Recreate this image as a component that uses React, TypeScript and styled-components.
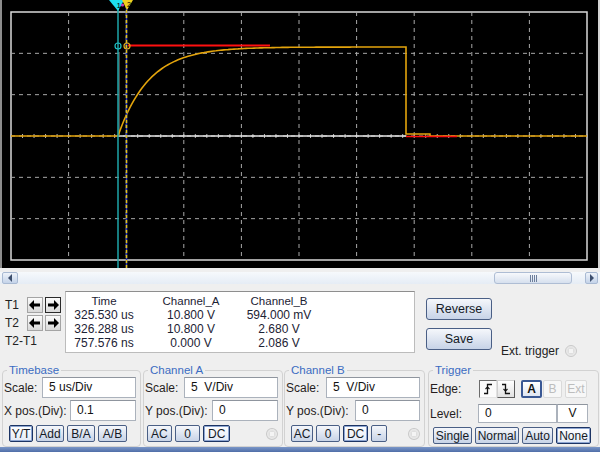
import React from "react";
import styled, { createGlobalStyle, css } from "styled-components";

const GlobalStyle = createGlobalStyle`
  html, body { margin: 0; padding: 0; }
  body {
    background: #eeeeee;
    font-family: "Liberation Sans", Arial, sans-serif;
  }
`;

const Window = styled.div`
  width: 600px;
  height: 452px;
  display: flex;
  flex-direction: column;
  background: #efefef;
  overflow: hidden;
`;

const Screen = styled.div`
  height: 268px;
  background: #000;
  border-left: 2px solid #8c8c8c;
  border-right: 2px solid #d4d4d4;
  svg {
    display: block;
  }
`;

const ScrollRow = styled.div`
  display: flex;
  height: 13px;
  margin-top: 4px;
  padding: 0 2px;
  background: linear-gradient(#f6f9fc, #e5ecf5);
`;

const ScrollButton = styled.div<{ $w: number }>`
  width: ${(p) => p.$w}px;
  box-sizing: border-box;
  border: 1px solid #a9bad3;
  border-radius: 2px;
  background: linear-gradient(#eef3fa, #c4d3e9);
  display: flex;
  align-items: center;
  justify-content: center;
`;

const Track = styled.div`
  flex: 1;
  display: flex;
`;

const Thumb = styled.div`
  width: 78px;
  margin-left: auto;
  margin-right: 13px;
  box-sizing: border-box;
  border: 1px solid #aebdd4;
  border-radius: 3px;
  background: linear-gradient(#f7f9fc, #d6e0ee);
  display: flex;
  align-items: center;
  justify-content: center;
  gap: 1px;
  span {
    width: 1px;
    height: 7px;
    background: #6d7f9c;
  }
`;

const Panel = styled.div`
  flex: 1;
  padding-top: 7px;
  display: flex;
  flex-direction: column;
`;

const TopRow = styled.div`
  display: flex;
  height: 62px;
`;

const CursorCol = styled.div`
  width: 65px;
  box-sizing: border-box;
  padding: 6px 0 0 5px;
  display: flex;
  flex-direction: column;
  gap: 2px;
`;

const CursorRow = styled.div`
  display: flex;
  align-items: center;
  height: 16px;
`;

const CursorLabel = styled.span`
  width: 22px;
  font-size: 12px;
  color: #222;
  white-space: nowrap;
`;

const ArrowButton = styled.div<{ $focus?: boolean }>`
  width: 16px;
  height: 16px;
  box-sizing: border-box;
  margin-right: 2px;
  border: 1px solid ${(p) => (p.$focus ? "#2a2a2a" : "#a4a4a4")};
  background: linear-gradient(#fbfbfb, #d9d9d9);
  display: flex;
  align-items: center;
  justify-content: center;
`;

const Readout = styled.div`
  width: 350px;
  height: 62px;
  box-sizing: border-box;
  background: #fff;
  border: 1px solid #bcbcbc;
  border-top-color: #8e8e8e;
  padding-top: 2px;
  display: grid;
  grid-template-columns: 76px 98px 78px;
  grid-auto-rows: 14px;
  align-content: start;
`;

const Cell = styled.div<{ $head?: boolean }>`
  text-align: center;
  font-size: ${(p) => (p.$head ? 11.5 : 12)}px;
  line-height: 14px;
  color: #1c2234;
  white-space: nowrap;
`;

const SideCol = styled.div`
  display: flex;
  flex-direction: column;
  gap: 8px;
  margin-left: 11px;
  padding-top: 7px;
`;

const buttonFace = css`
  box-sizing: border-box;
  border: 1px solid #4a5f85;
  border-radius: 2px;
  background: linear-gradient(#f5f7fb, #c7d3e7);
  color: #141a26;
  font-family: "Liberation Sans", Arial, sans-serif;
  font-size: 12px;
  padding: 0;
  display: flex;
  align-items: center;
  justify-content: center;
  white-space: nowrap;
`;

const BigButton = styled.div`
  ${buttonFace}
  width: 66px;
  height: 22px;
  border-radius: 3px;
  font-size: 12.5px;
`;

const ExtTrigger = styled.div`
  display: flex;
  align-items: center;
  align-self: flex-end;
  margin: 0 0 -5px 9px;
  font-size: 12px;
  color: #222;
`;

const Radio = styled.span<{ $ml?: number }>`
  width: 12px;
  height: 12px;
  box-sizing: border-box;
  margin-left: ${(p) => p.$ml ?? 6}px;
  border-radius: 50%;
  border: 1px solid #c9c9c9;
  background: radial-gradient(circle, #f4f4f4 30%, #dcdcdc 31%, #ececec 70%);
`;

const Groups = styled.div`
  display: flex;
  margin-top: 11px;
  padding-left: 2px;
`;

const Group = styled.fieldset<{ $w: number; $ml?: number }>`
  width: ${(p) => p.$w}px;
  box-sizing: border-box;
  min-width: 0;
  margin: 0 0 0 ${(p) => p.$ml ?? 0}px;
  padding: 0 4px 2px 1px;
  border: 1px solid #d2d2d2;
  border-radius: 4px;
`;

const Legend = styled.legend`
  font-size: 11.5px;
  line-height: 13px;
  color: #3b6cc2;
  padding: 0 2px;
  margin-left: 3px;
`;

const FieldRow = styled.div<{ $h?: number; $mt?: number }>`
  display: flex;
  align-items: center;
  height: ${(p) => p.$h ?? 21}px;
  margin-top: ${(p) => p.$mt ?? 0}px;
`;

const FieldLabel = styled.span<{ $w?: number }>`
  font-size: 12px;
  color: #261d1d;
  white-space: nowrap;
  ${(p) => p.$w && `width: ${p.$w}px;`}
  flex-shrink: 0;
`;

const TextBox = styled.div<{ $w: number; $h?: number; $auto?: boolean; $center?: boolean }>`
  width: ${(p) => p.$w}px;
  height: ${(p) => p.$h ?? 21}px;
  box-sizing: border-box;
  margin-left: ${(p) => (p.$auto === false ? 0 : "auto")};
  border: 1px solid #abb2bc;
  border-top-color: #8f959e;
  background: #fff;
  font-size: 12px;
  line-height: ${(p) => (p.$h ?? 21) - 2}px;
  padding-left: ${(p) => (p.$center ? 0 : 6)}px;
  text-align: ${(p) => (p.$center ? "center" : "left")};
  color: #111;
  white-space: pre;
`;

const ButtonRow = styled.div<{ $ml: number }>`
  display: flex;
  align-items: center;
  gap: 3px;
  height: 17px;
  margin: 4px 0 0 ${(p) => p.$ml}px;
`;

const ModeButton = styled.div<{ $w: number; $active?: boolean }>`
  ${buttonFace}
  width: ${(p) => p.$w}px;
  height: 17px;
  ${(p) =>
    p.$active &&
    css`
      border-color: #1c3464;
      background: linear-gradient(#ffffff, #e3eaf6);
      box-shadow: inset 0 0 0 1px #8ea6d2;
    `}
`;

const EdgeButton = styled.div<{ $pressed?: boolean }>`
  width: 18px;
  height: 18px;
  box-sizing: border-box;
  display: flex;
  align-items: center;
  justify-content: center;
  border: 1px solid;
  ${(p) =>
    p.$pressed
      ? css`
          border-color: #6c6c6c #e2e2e2 #e2e2e2 #6c6c6c;
          background: #fbfbfb;
        `
      : css`
          border-color: #d0d0d0 #5c5c5c #5c5c5c #d0d0d0;
          background: linear-gradient(#ffffff, #e2e2e2);
        `}
`;

const SourceButton = styled.div<{ $w: number; $active?: boolean; $ml?: number }>`
  width: ${(p) => p.$w}px;
  height: 18px;
  margin-left: ${(p) => p.$ml ?? 0}px;
  box-sizing: border-box;
  display: flex;
  align-items: center;
  justify-content: center;
  font-size: 12px;
  border-radius: 2px;
  ${(p) =>
    p.$active
      ? css`
          border: 2px solid #3a5894;
          background: linear-gradient(#ffffff, #dfe6f2);
          color: #111;
          font-weight: bold;
        `
      : css`
          border: 1px solid #dadada;
          background: #f7f7f7;
          color: #bdbdbd;
        `}
`;

const BottomStrip = styled.div`
  height: 5px;
  background: linear-gradient(#7b97c8, #4f6ea8);
`;

/* ---------- plot ---------- */

const X0 = 11;
const X1 = 587;
const Y0 = 12;
const Y1 = 260;
const DX = (X1 - X0) / 10;
const DY = (Y1 - Y0) / 6;
const YC = Y0 + DY * 3;

const chargePath = (() => {
  let d = `M${X0} ${YC} H118`;
  for (let x = 118; x <= 406; x += 2) {
    const y = YC - 89 * (1 - Math.exp(-(x - 118) / 31));
    d += ` L${x} ${y.toFixed(1)}`;
  }
  d += ` L406 47 V134 H430 V${YC} H${X1}`;
  return d;
})();

const Plot = () => (
  <svg width={596} height={268} viewBox="2 0 596 268">
    <rect x={X0} y={Y0} width={X1 - X0} height={Y1 - Y0} fill="none" stroke="#d9d9d9" strokeWidth={1.5} />
    {Array.from({ length: 9 }, (_, i) => (
      <line
        key={`v${i}`}
        x1={X0 + DX * (i + 1)}
        x2={X0 + DX * (i + 1)}
        y1={Y0}
        y2={Y1}
        stroke="#a8a8a8"
        strokeDasharray="4 4"
      />
    ))}
    {Array.from({ length: 5 }, (_, j) => (
      <line
        key={`h${j}`}
        x1={X0}
        x2={X1}
        y1={Y0 + DY * (j + 1)}
        y2={Y0 + DY * (j + 1)}
        stroke="#a8a8a8"
        strokeDasharray="4 4"
      />
    ))}
    {Array.from({ length: 51 }, (_, k) => (
      <line key={`t${k}`} x1={X0 + k * (DX / 5)} x2={X0 + k * (DX / 5)} y1={YC - 2} y2={YC + 2} stroke="#b8b8b8" />
    ))}

    {/* channel traces */}
    <path d={`M118 ${YC} H406`} stroke="#e6e6e6" strokeWidth={1.6} fill="none" />
    <path d="M119 52 V136" stroke="#8a8a8a" fill="none" />
    <path d={chargePath} stroke="#e3a40c" strokeWidth={1.6} fill="none" />
    <path d="M128 45.5 H270" stroke="#ff1010" strokeWidth={2} fill="none" />
    <path d={`M406 ${YC + 0.5} H457`} stroke="#ff1010" strokeWidth={1.6} fill="none" />

    {/* cursor 1 */}
    <line x1={118} x2={118} y1={0} y2={268} stroke="#1ea6aa" strokeWidth={1.5} />
    {/* cursor 2 */}
    <line x1={126.5} x2={126.5} y1={0} y2={268} stroke="#2f3fb8" strokeWidth={1.5} />
    <line x1={126.5} x2={126.5} y1={0} y2={268} stroke="#e3c21a" strokeWidth={1.5} strokeDasharray="3 2" />
    <circle cx={118} cy={46} r={3} fill="none" stroke="#1ec0c4" strokeWidth={1.2} />
    <circle cx={127} cy={46} r={3} fill="none" stroke="#e3b01a" strokeWidth={1.2} />

    <polygon points="109,0 124,0 118,11" fill="#1ee0f0" />
    <polygon points="122,0 133,0 127,10" fill="#f0d020" />
    <circle cx={122.5} cy={5} r={1.6} fill="#c040c0" />
    <text x={116.5} y={8} fontSize={8} fontFamily="Liberation Sans" fill="#000">1</text>
    <text x={127} y={7} fontSize={7} fontFamily="Liberation Sans" fill="#000">2</text>
  </svg>
);

/* ---------- small glyphs ---------- */

const Arrow = ({ dir }: { dir: "left" | "right" }) => (
  <svg width={12} height={10} viewBox="0 0 12 10">
    <g transform={dir === "right" ? "translate(12 0) scale(-1 1)" : undefined}>
      <polygon points="0,5 5,0 5,10" fill="#000" />
      <rect x={4} y={3.5} width={7} height={3} fill="#000" />
    </g>
  </svg>
);

const ScrollArrow = ({ dir }: { dir: "left" | "right" }) => (
  <svg width={6} height={8} viewBox="0 0 6 8">
    <polygon points={dir === "left" ? "5,0 5,8 1,4" : "1,0 1,8 5,4"} fill="#3d4f6e" />
  </svg>
);

const EdgeGlyph = ({ rising }: { rising: boolean }) => (
  <svg width={12} height={12} viewBox="0 0 12 12">
    <path
      d={rising ? "M2 10.5 H5.5 V1.5 H10" : "M2 1.5 H5.5 V10.5 H10"}
      stroke="#111"
      strokeWidth={1.3}
      fill="none"
    />
    <path d={rising ? "M3.5 6 L5.5 4 L7.5 6" : "M3.5 6 L5.5 8 L7.5 6"} stroke="#111" strokeWidth={1.1} fill="none" />
  </svg>
);

const rows = [
  ["325.530 us", "10.800 V", "594.000 mV"],
  ["326.288 us", "10.800 V", "2.680 V"],
  ["757.576 ns", "0.000 V", "2.086 V"],
];

export default function App() {
  return (
    <>
      <GlobalStyle />
      <Window>
        <Screen>
          <Plot />
        </Screen>

        <ScrollRow>
          <ScrollButton $w={16}>
            <ScrollArrow dir="left" />
          </ScrollButton>
          <Track>
            <Thumb>
              <span />
              <span />
              <span />
              <span />
            </Thumb>
          </Track>
          <ScrollButton $w={13}>
            <ScrollArrow dir="right" />
          </ScrollButton>
        </ScrollRow>

        <Panel>
          <TopRow>
            <CursorCol>
              <CursorRow>
                <CursorLabel>T1</CursorLabel>
                <ArrowButton>
                  <Arrow dir="left" />
                </ArrowButton>
                <ArrowButton $focus>
                  <Arrow dir="right" />
                </ArrowButton>
              </CursorRow>
              <CursorRow>
                <CursorLabel>T2</CursorLabel>
                <ArrowButton>
                  <Arrow dir="left" />
                </ArrowButton>
                <ArrowButton>
                  <Arrow dir="right" />
                </ArrowButton>
              </CursorRow>
              <CursorRow>
                <CursorLabel>T2-T1</CursorLabel>
              </CursorRow>
            </CursorCol>

            <Readout>
              <Cell $head>Time</Cell>
              <Cell $head>Channel_A</Cell>
              <Cell $head>Channel_B</Cell>
              {rows.map((r) =>
                r.map((v, i) => <Cell key={r[0] + i}>{v}</Cell>)
              )}
            </Readout>

            <SideCol>
              <BigButton>Reverse</BigButton>
              <BigButton>Save</BigButton>
            </SideCol>

            <ExtTrigger>
              Ext. trigger
              <Radio />
            </ExtTrigger>
          </TopRow>

          <Groups>
            <Group $w={139}>
              <Legend>Timebase</Legend>
              <FieldRow>
                <FieldLabel>Scale:</FieldLabel>
                <TextBox $w={94}>5 us/Div</TextBox>
              </FieldRow>
              <FieldRow $mt={2}>
                <FieldLabel>X pos.(Div):</FieldLabel>
                <TextBox $w={66}>0.1</TextBox>
              </FieldRow>
              <ButtonRow $ml={5}>
                <ModeButton $w={24} $active>Y/T</ModeButton>
                <ModeButton $w={28}>Add</ModeButton>
                <ModeButton $w={28}>B/A</ModeButton>
                <ModeButton $w={29}>A/B</ModeButton>
              </ButtonRow>
            </Group>

            <Group $w={140} $ml={2}>
              <Legend>Channel A</Legend>
              <FieldRow>
                <FieldLabel>Scale:</FieldLabel>
                <TextBox $w={94}>{"5  V/Div"}</TextBox>
              </FieldRow>
              <FieldRow $mt={2}>
                <FieldLabel>Y pos.(Div):</FieldLabel>
                <TextBox $w={66}>0</TextBox>
              </FieldRow>
              <ButtonRow $ml={2}>
                <ModeButton $w={25}>AC</ModeButton>
                <ModeButton $w={26}>0</ModeButton>
                <ModeButton $w={27} $active>DC</ModeButton>
                <Radio $ml={33} />
              </ButtonRow>
            </Group>

            <Group $w={141} $ml={1}>
              <Legend>Channel B</Legend>
              <FieldRow>
                <FieldLabel>Scale:</FieldLabel>
                <TextBox $w={94}>{"5  V/Div"}</TextBox>
              </FieldRow>
              <FieldRow $mt={2}>
                <FieldLabel>Y pos.(Div):</FieldLabel>
                <TextBox $w={65}>0</TextBox>
              </FieldRow>
              <ButtonRow $ml={5}>
                <ModeButton $w={23}>AC</ModeButton>
                <ModeButton $w={25}>0</ModeButton>
                <ModeButton $w={26} $active>DC</ModeButton>
                <ModeButton $w={17}>-</ModeButton>
                <Radio $ml={18} />
              </ButtonRow>
            </Group>

            <Group $w={171} $ml={3}>
              <Legend>Trigger</Legend>
              <FieldRow $h={23}>
                <FieldLabel $w={49}>Edge:</FieldLabel>
                <EdgeButton $pressed>
                  <EdgeGlyph rising />
                </EdgeButton>
                <EdgeButton>
                  <EdgeGlyph rising={false} />
                </EdgeButton>
                <SourceButton $w={21} $active $ml={6}>
                  A
                </SourceButton>
                <SourceButton $w={19} $ml={1}>
                  B
                </SourceButton>
                <SourceButton $w={22} $ml={3}>
                  Ext
                </SourceButton>
              </FieldRow>
              <FieldRow $h={19} $mt={4}>
                <FieldLabel $w={48}>Level:</FieldLabel>
                <TextBox $w={79} $h={19} $auto={false}>
                  0
                </TextBox>
                <TextBox $w={31} $h={19} $auto={false} $center>
                  V
                </TextBox>
              </FieldRow>
              <ButtonRow $ml={3}>
                <ModeButton $w={39}>Single</ModeButton>
                <ModeButton $w={44}>Normal</ModeButton>
                <ModeButton $w={31}>Auto</ModeButton>
                <ModeButton $w={35} $active>None</ModeButton>
              </ButtonRow>
            </Group>
          </Groups>
        </Panel>
        <BottomStrip />
      </Window>
    </>
  );
}
